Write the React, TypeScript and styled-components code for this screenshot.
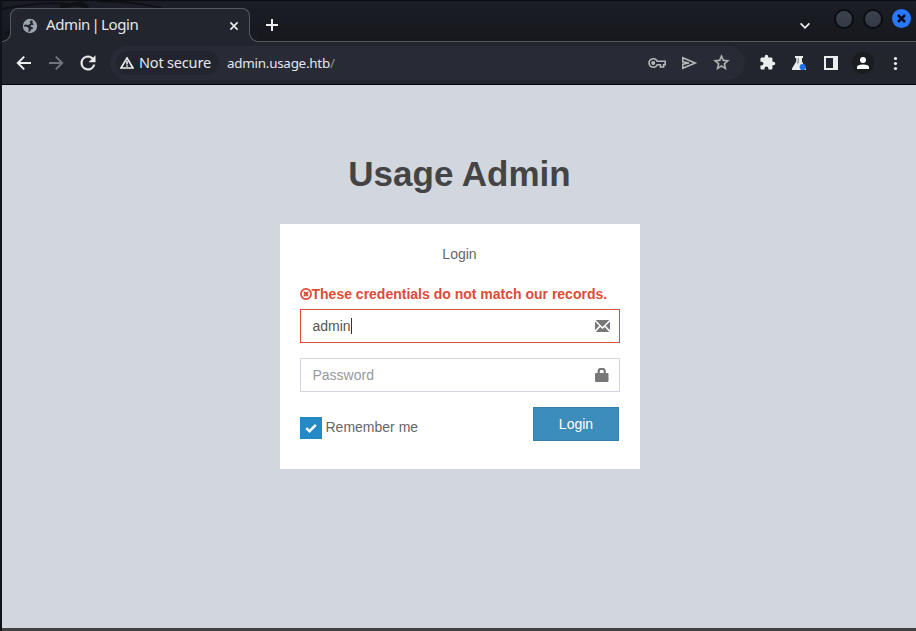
import React from "react";
import styled, { createGlobalStyle, css } from "styled-components";

const GlobalStyle = createGlobalStyle`
  * { box-sizing: border-box; }
  html, body { margin: 0; padding: 0; overflow: hidden; }
  body { background: #0e1017; }
  button, input { font: inherit; margin: 0; }
`;

const chromeText = css`
  font-family: "Noto Sans", sans-serif;
  color: #e6e7ea;
  white-space: nowrap;
`;

const BrowserWindow = styled.div`
  width: 916px;
  height: 631px;
  display: flex;
  flex-direction: column;
  border-top: 1px solid #0b0d12;
  border-left: 2px solid #10121c;
`;

const TabStrip = styled.header`
  position: relative;
  height: 41px;
  flex: none;
  display: flex;
  align-items: flex-end;
  padding-left: 8px;
  background: linear-gradient(#1b1e27, #17181e);
  border-bottom: 1px solid #55565a;
`;

const Wallpaper = styled.svg`
  position: absolute;
  left: 0;
  top: 0;
`;

const TabBox = styled.div`
  ${chromeText}
  position: relative;
  width: 240px;
  height: 34px;
  margin-bottom: -1px;
  padding: 0 9px 0 11px;
  display: flex;
  align-items: center;
  background: #22252e;
  border: 1px solid #565860;
  border-bottom: none;
  border-radius: 8px 8px 0 0;
  font-size: 15px;
  line-height: 20px;

  &::before,
  &::after {
    content: "";
    position: absolute;
    bottom: 0;
    width: 9px;
    height: 9px;
  }
  &::before {
    left: -9px;
    background: radial-gradient(circle at 0 0, #16181e 7.6px, #565860 8.1px, #565860 8.6px, #22252e 9.1px);
  }
  &::after {
    right: -9px;
    background: radial-gradient(circle at 100% 0, #191b22 7.6px, #565860 8.1px, #565860 8.6px, #22252e 9.1px);
  }
`;

const TabTitle = styled.span`
  flex: 1;
  padding: 0 0 3px 8px;
  letter-spacing: -0.4px;
  word-spacing: -1.9px;
`;

const NewTab = styled.button`
  width: 14px;
  height: 14px;
  margin: 0 0 9px 15px;
  padding: 0;
  border: none;
  background: none;
  display: flex;
`;

const WindowControls = styled.div`
  align-self: stretch;
  margin-left: auto;
  display: flex;
  align-items: flex-start;
  padding: 8px 5px 0 0;
  gap: 9px;
`;

const TabSearch = styled.span`
  display: flex;
  margin: 12px 15px 0 0;
`;

const WindowButton = styled.span<{ $close?: boolean }>`
  width: ${(p) => (p.$close ? 19 : 20)}px;
  height: ${(p) => (p.$close ? 19 : 20)}px;
  border-radius: 50%;
  border: ${(p) => (p.$close ? "none" : "2px solid #0c0d12")};
  background: ${(p) => (p.$close ? "#2777ff" : "linear-gradient(#3b414d, #343945)")};
  display: flex;
  align-items: center;
  justify-content: center;
`;

const Toolbar = styled.nav`
  height: 43px;
  flex: none;
  display: flex;
  align-items: center;
  padding: 0 0 1px 14px;
  background: #22252e;
  border-bottom: 1px solid #050609;
`;

const IconRow = styled.div<{ $gap: number }>`
  display: flex;
  flex: none;
  align-items: center;
  gap: ${(p) => p.$gap}px;
`;

const AddressBar = styled.div`
  ${chromeText}
  width: 635px;
  flex: none;
  height: 34px;
  margin: 0 14px 0 11px;
  padding: 0 14px 0 6px;
  display: flex;
  align-items: center;
  border-radius: 17px;
  background: #282a35;
`;

const SecurityChip = styled.div`
  width: 103px;
  height: 24px;
  padding: 0 0 2px 4px;
  display: flex;
  align-items: center;
  gap: 5px;
  border-radius: 12px;
  background: #22252e;
  font-size: 14.5px;
  letter-spacing: -0.18px;
  svg { position: relative; top: 1px; }
`;

const Url = styled.span`
  flex: 1;
  margin-left: 8px;
  font-size: 13.4px;
  letter-spacing: -0.24px;

  i {
    font-style: normal;
    color: #8e9097;
  }
`;

const MenuIcons = styled.div`
  display: flex;
  align-items: center;
  gap: 12px;
  margin-left: 12px;
`;

const Reload = styled.span`
  display: flex;
  margin-left: -3px;
`;

const Avatar = styled.span`
  width: 22px;
  height: 22px;
  border-radius: 50%;
  background: #1b1c20;
  display: flex;
  align-items: center;
  justify-content: center;
`;

const Page = styled.main`
  flex: 1;
  background: #d2d6df;
  border-bottom: 3px solid #424340;
  font-family: "Liberation Sans", Arial, sans-serif;
  font-size: 14px;
  line-height: 20px;
  color: #666;
`;

const LoginBox = styled.section`
  width: 360px;
  margin: 64px 0 0 278px;
`;

const Brand = styled.h1`
  margin: 0 0 25px;
  padding-right: 1px;
  font-size: 35px;
  line-height: 50px;
  font-weight: bold;
  text-align: center;
  color: #444;
`;

const Card = styled.form`
  height: 245px;
  padding: 20px;
  background: #fff;
`;

const Message = styled.p`
  margin: 0 0 20px;
  text-align: center;
  padding-right: 1px;
`;

const ErrorLabel = styled.label`
  display: flex;
  align-items: center;
  margin: 0 0 5px -0.5px;
  font-weight: bold;
  color: #dd4b39;
`;

const Field = styled.div<{ $invalid?: boolean }>`
  height: 34px;
  margin-bottom: 15px;
  padding: 0 9px 0 11.5px;
  display: flex;
  align-items: center;
  border: 1px solid ${(p) => (p.$invalid ? "#dd4b39" : "#d2d6de")};
  color: ${(p) => (p.$invalid ? "#555" : "#999")};
  svg { margin-left: auto; }
`;

const Caret = styled.span`
  width: 1px;
  height: 16px;
  background: #333;
`;

const Actions = styled.div`
  display: flex;
  justify-content: space-between;
  padding-right: 1px;
`;

const Remember = styled.label`
  display: flex;
  align-items: center;
  gap: 3.5px;
  height: 22px;
  margin-top: 10px;
  line-height: 20px;
  span { padding-bottom: 2px; }
`;

const Checkbox = styled.i`
  width: 22px;
  height: 22px;
  background: #2489c5;
  display: flex;
  align-items: center;
  justify-content: center;
`;

const Submit = styled.button`
  width: 86px;
  height: 34px;
  padding: 0;
  border: 1px solid #367fa9;
  background: #3c8dbc;
  color: #fff;
`;

const Globe = () => (
  <svg width="16" height="16" viewBox="0 0 16 16">
    <circle cx="8" cy="8" r="7.2" fill="#9da3ad" />
    <path d="M9.4 2.2 7.6 3.8 8.6 5.2 6.6 7 3.4 6.6 2 7.2 2 8.6 4.8 8.8 6.7 10.3 6.3 13.8 8.2 13.6 8.9 11.6 11 10.8 10.6 9.2 8.4 8.4 9.2 6.9 11.6 7 11.2 5.5 10.2 4.8 11 2.9Z" fill="#22252e" />
  </svg>
);

const Line = ({ d, size = 16, color = "#eceded", width = 2 }: { d: string; size?: number; color?: string; width?: number }) => (
  <svg width={size} height={size} viewBox={`0 0 ${size} ${size}`} fill="none" stroke={color} strokeWidth={width}>
    <path d={d} />
  </svg>
);

const Solid = ({ d, box = 24, size = 18, color = "#eceded", edge = 0 }: { d: string; box?: number; size?: number; color?: string; edge?: number }) => (
  <svg width={size} height={size} viewBox={`0 0 ${box} ${box}`} fill={color} stroke={color} strokeWidth={edge}>
    <path fillRule="evenodd" d={d} />
  </svg>
);

export default function App() {
  return (
    <>
      <GlobalStyle />
      <BrowserWindow>
        <TabStrip>
          <Wallpaper width="170" height="40" fill="none" stroke="#101116" strokeWidth="2">
            <path d="M0 8Q55-3 86 7M95 0Q130 0 160 7M0 34 12 28" />
            <path d="M58 6 79 2 86 7" strokeWidth="4" />
          </Wallpaper>
          <TabBox>
            <Globe />
            <TabTitle>Admin | Login</TabTitle>
            <Line size={12} width={1.6} d="M2.4 2.4 9.6 9.6M9.6 2.4 2.4 9.6" />
          </TabBox>
          <NewTab aria-label="New tab"><Line size={14} d="M7 1V13M1 7H13" /></NewTab>
          <WindowControls>
            <TabSearch><Line size={10} width={1.7} d="M.6 2.4 5 6.8 9.4 2.4" /></TabSearch>
            <WindowButton />
            <WindowButton />
            <WindowButton $close><Line size={9} width={2.5} color="#090c18" d="M1 1 8 8M8 1 1 8" /></WindowButton>
          </WindowControls>
        </TabStrip>
        <Toolbar>
          <IconRow $gap={16}>
            <Line d="M15 8H2.2M8.2 1.6 1.8 8 8.2 14.4" />
            <Line color="#73757b" d="M1 8H13.8M7.8 1.6 14.2 8 7.8 14.4" />
            <Reload>
              <Solid size={22} edge={0.4} d="M17.65 6.35A7.95 7.95 0 0 0 12 4a8 8 0 1 0 7.73 10h-2.08A6 6 0 1 1 12 6c1.66 0 3.14.69 4.22 1.78L13 11h7V4z" />
            </Reload>
          </IconRow>
          <AddressBar>
            <SecurityChip>
              <svg width="14" height="14" viewBox="0 0 14 14" fill="none" stroke="#eceded" strokeWidth="1.6">
                <path d="M7 2 13 12H1Z" />
                <path d="M7 5V8.6M7 9.3V10.8" />
              </svg>
              Not secure
            </SecurityChip>
            <Url>admin.usage.htb<i>/</i></Url>
            <IconRow $gap={14}>
              <svg width="18" height="18" viewBox="0 0 18 18" fill="none" stroke="#b7b8bb" strokeWidth="1.6">
                <path d="M9.2 7.2A4.3 4.3 0 1 0 9.2 10.8H12.4V13H15.6V10.8H17.2V7.2Z" />
                <circle cx="5.2" cy="9" r="1.2" fill="#b7b8bb" />
              </svg>
              <Line size={18} width={1.6} color="#b7b8bb" d="M2.8 3.7 15.2 9 2.8 14.3V10.2L9 9 2.8 7.8Z" />
              <Solid size={19} edge={0.4} color="#b7b8bb" d="M22 9.24l-7.19-.62L12 2 9.19 8.63 2 9.24l5.46 4.73L5.82 21 12 17.27 18.18 21l-1.63-7.03zM12 15.4l-3.76 2.27 1-4.28-3.32-2.88 4.38-.38L12 6.1l1.71 4.04 4.38.38-3.32 2.88 1 4.28z" />
            </IconRow>
          </AddressBar>
          <IconRow $gap={14}>
            <Solid size={17} d="M20.5 11H19V7c0-1.1-.9-2-2-2h-4V3.5a2.5 2.5 0 0 0-5 0V5H4c-1.1 0-1.99.9-1.99 2v3.8H3.5a2.7 2.7 0 0 1 0 5.4H2V20c0 1.1.9 2 2 2h3.8v-1.5a2.7 2.7 0 0 1 5.4 0V22H17c1.1 0 2-.9 2-2v-4h1.5a2.5 2.5 0 0 0 0-5z" />
            <svg width="18" height="18" viewBox="0 0 18 18">
              <path d="M5 2H13V4H12V7.5L15.8 14.5V16H2.6Q1.5 16 2 14.4L6.2 7.5V4H5Z" fill="#eceded" />
              <path d="M7.8 4H8.8V8.2L7.2 10.8Z" fill="#8a8c90" />
              <circle cx="12.7" cy="13" r="3.1" fill="#1a73e8" />
            </svg>
            <Solid size={18} box={18} d="M2 2H16V16H2ZM4 4V14H11V4Z" />
          </IconRow>
          <MenuIcons>
            <Avatar>
              <svg width="14" height="14" viewBox="0 0 14 14" fill="#fff">
                <circle cx="7" cy="4" r="3" /><path d="M1 13V11Q1 8.5 7 8.5 13 8.5 13 11V13Z" />
              </svg>
            </Avatar>
            <svg width="18" height="18" viewBox="0 0 18 18" fill="#eceded">
              <circle cx="9.5" cy="4.5" r="1.6" />
              <circle cx="9.5" cy="9.5" r="1.6" />
              <circle cx="9.5" cy="14.5" r="1.6" />
            </svg>
          </MenuIcons>
        </Toolbar>
        <Page>
          <LoginBox>
            <Brand>Usage Admin</Brand>
            <Card>
              <Message>Login</Message>
              <ErrorLabel>
                <svg width="12" height="12" viewBox="0 0 12 12" fill="none" stroke="#dd4b39">
                  <circle cx="6" cy="6" r="5.1" strokeWidth="1.7" />
                  <path d="M4 4 8 8M8 4 4 8" strokeWidth="2.1" />
                </svg>
                These credentials do not match our records.
              </ErrorLabel>
              <Field $invalid>
                admin<Caret />
                <svg width="15" height="12" viewBox="0 0 15 12" fill="#777">
                  <path d="M.6 0H14.4L7.5 7ZM0 1.5 4.2 5.8 0 10.3ZM15 1.5 10.8 5.8 15 10.3ZM.7 12 5.2 6.9 7.5 9 9.8 6.9 14.3 12Z" />
                </svg>
              </Field>
              <Field>
                Password
                <svg width="15" height="14" viewBox="0 0 15 14" fill="#777">
                  <path fillRule="evenodd" d="M2.6 5V3.5Q2.6 0 5.2 0H8.2Q10.8 0 10.8 3.5V5H12.5Q13.5 5 13.5 6V13Q13.5 14 12.5 14H1Q0 14 0 13V6Q0 5 1 5ZM4.8 5H8.7V3.4Q8.7 2 7.6 2H5.9Q4.8 2 4.8 3.4Z" />
                </svg>
              </Field>
              <Actions>
                <Remember>
                  <Checkbox><Line size={12} width={2.4} color="#fff" d="M1.2 6.1 4.5 9.2 10.8 2.8" /></Checkbox>
                  <span>Remember me</span>
                </Remember>
                <Submit type="button">Login</Submit>
              </Actions>
            </Card>
          </LoginBox>
        </Page>
      </BrowserWindow>
    </>
  );
}
